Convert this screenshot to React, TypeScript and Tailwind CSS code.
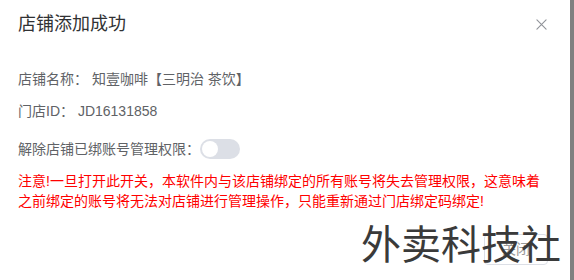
const FONT = "font-['Liberation_Sans','Noto_Sans_CJK_SC',sans-serif]"

const CloseIcon = () => (
  <svg viewBox="0 0 12 12" className="w-[11px] h-[11px]" fill="none" stroke="#909399" strokeWidth="1.2" strokeLinecap="round">
    <path d="M1 1L11 11M11 1L1 11" />
  </svg>
)

const Switch = ({ on = false }: { on?: boolean }) => (
  <span className={`inline-flex items-center w-[40px] h-[20px] rounded-full p-[2px] ${on ? 'bg-[#409eff] justify-end' : 'bg-[#dcdfe6]'}`}>
    <span className="block w-[16px] h-[16px] rounded-full bg-white" />
  </span>
)

export default function App() {
  return (
    <div className={`${FONT} relative flex w-[574px] h-[280px] overflow-hidden bg-[#808080]`}>
      <div className="flex flex-col w-[570px] h-full bg-white">
        {/* header */}
        <div className="flex items-center justify-between pt-3 pl-[18px] pr-[23px]">
          <span className="text-[18px] leading-[24px] text-[#303133]">店铺添加成功</span>
          <CloseIcon />
        </div>

        {/* body */}
        <div className="flex flex-col pl-[18px] pt-[33px] text-[14px] leading-[20px] text-[#606266]">
          <div>店铺名称： 知壹咖啡【三明治 茶饮】</div>
          <div className="mt-[12px]">门店ID： JD16131858</div>
          <div className="mt-[18px] flex items-center">
            <span>解除店铺已绑账号管理权限：</span>
            <Switch />
          </div>
          <div className="mt-[12px] text-[#ff0000]">
            注意!一旦打开此开关，本软件内与该店铺绑定的所有账号将失去管理权限，这意味着
            <br />
            之前绑定的账号将无法对店铺进行管理操作，只能重新通过门店绑定码绑定!
          </div>
        </div>

        {/* footer */}
        <div className="flex justify-end pr-[22px] pt-[23px]">
          <button className="h-[31px] px-[17px] border border-[#dcdfe6] rounded-[4px] bg-white text-[14px] text-[#999]">
            关闭
          </button>
        </div>
      </div>

      {/* watermark */}
      <div className="absolute left-[361px] top-[222px] text-[40px] leading-[40px] text-[#3a3a3a] font-['Noto_Sans_CJK_SC',sans-serif] pointer-events-none">
        外卖科技社
      </div>
    </div>
  )
}
